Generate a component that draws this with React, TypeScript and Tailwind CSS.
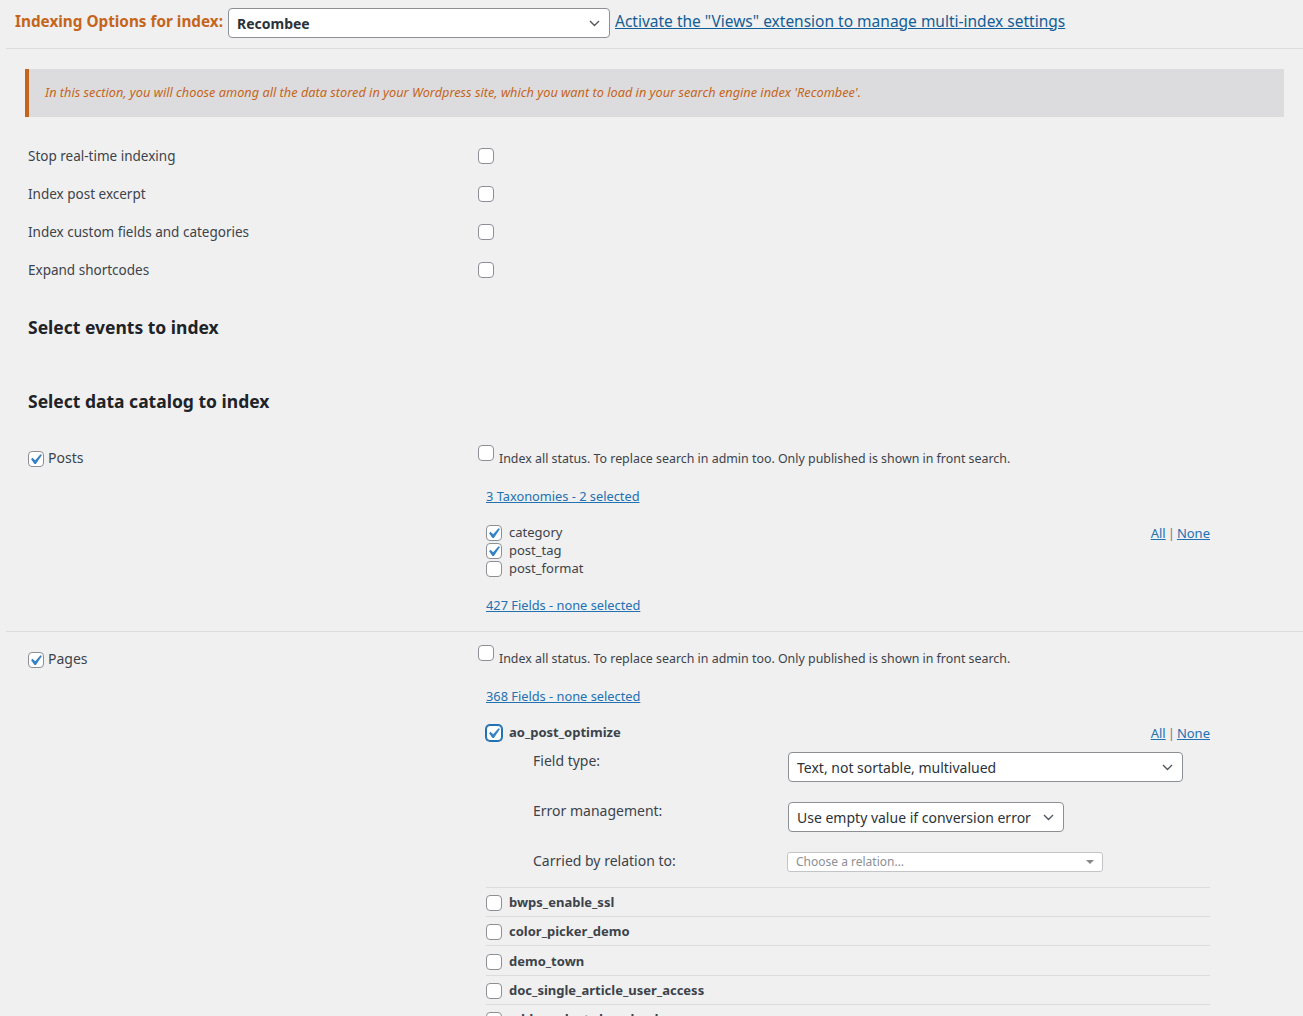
import React from 'react';

const font = { fontFamily: '"Noto Sans", "Open Sans", sans-serif' };

function Check({ checked = false, focus = false }: { checked?: boolean; focus?: boolean }) {
  return (
    <span
      className={
        'relative inline-block w-4 h-4 shrink-0 rounded-[4px] border bg-white ' +
        (focus ? 'border-[#2271b1] shadow-[0_0_0_1px_#2271b1]' : 'border-[#8c8f94]')
      }
    >
      {checked && (
        <svg viewBox="0 0 20 20" className="absolute top-[-3px] left-[-4px] w-[21px] h-[21px]">
          <path d="M14.83 4.89l1.34.94-5.81 8.38H9.02L5.78 9.67l1.34-1.25 2.57 2.4z" fill="#3582c4" />
        </svg>
      )}
    </span>
  );
}

function Chevron() {
  return (
    <svg width="11" height="7" viewBox="0 0 11 7" className="shrink-0">
      <polyline points="1,1 5.5,5.5 10,1" fill="none" stroke="#50575e" strokeWidth="1.4" />
    </svg>
  );
}

function Select({ value, width, bold = false }: { value: string; width: string; bold?: boolean }) {
  return (
    <div
      className={
        'flex items-center justify-between h-[30px] pl-[8px] pr-[9px] bg-white border border-[#8c8f94] rounded-[4px] text-[14px] text-[#2c3338] ' +
        width +
        (bold ? ' font-bold' : '')
      }
    >
      <span className="whitespace-nowrap">{value}</span>
      <Chevron />
    </div>
  );
}

function AllNone() {
  return (
    <div className="text-[13px] leading-[18px] whitespace-nowrap">
      <a className="text-[#2271b1] underline">All</a>
      <span className="text-[#787c82] mx-[2px]">|</span>
      <a className="text-[#2271b1] underline">None</a>
    </div>
  );
}

const options = [
  'Stop real-time indexing',
  'Index post excerpt',
  'Index custom fields and categories',
  'Expand shortcodes',
];

const taxonomies = [
  { name: 'category', checked: true },
  { name: 'post_tag', checked: true },
  { name: 'post_format', checked: false },
];

const fields = [
  { name: 'bwps_enable_ssl', h: 'h-[29px]' },
  { name: 'color_picker_demo', h: 'h-[29px]' },
  { name: 'demo_town', h: 'h-[30px]' },
  { name: 'doc_single_article_user_access', h: 'h-[29px]' },
  { name: 'edd_product_download', h: 'h-[29px]' },
];

const statusText = 'Index all status. To replace search in admin too. Only published is shown in front search.';

export default function App() {
  return (
    <div className="min-h-screen bg-[#f0f0f1] pl-[6px] text-[#3c434a] overflow-hidden h-[1016px]" style={font}>
      {/* header */}
      <div className="flex items-center pt-[8px] pl-[9px]">
        <div className="w-[213px] whitespace-nowrap text-[15.3px] font-bold text-[#c5651b] mb-[3px]">
          Indexing Options for index:
        </div>
        <Select value="Recombee" width="w-[382px]" bold />
        <a className="ml-[5px] text-[15.5px] text-[#135e96] underline whitespace-nowrap mb-[3px]">
          Activate the "Views" extension to manage multi-index settings
        </a>
      </div>
      <div className="mt-[10px] border-t border-[#dcdcde]" />

      <div className="px-[19px]">
        <div className="mt-[20px] h-[48px] flex items-center bg-[#dcdcde] border-l-4 border-[#c5651b] pl-[16px]">
          <p className="text-[12.75px] italic text-[#c5651b]">
            In this section, you will choose among all the data stored in your Wordpress site, which you want to load in your search engine index 'Recombee'.
          </p>
        </div>

        <div className="mt-[20px] pl-[3px]">
          {options.map((o) => (
            <div key={o} className="grid grid-cols-[450px_1fr] items-center h-[38px]">
              <span className="text-[13.5px]">{o}</span>
              <div className="flex">
                <Check />
              </div>
            </div>
          ))}

          <h2 className="mt-[26px] text-[17.5px] leading-[24px] font-bold text-[#1d2327]">Select events to index</h2>
          <h2 className="mt-[50px] text-[17.5px] leading-[24px] font-bold text-[#1d2327]">Select data catalog to index</h2>

          {/* Posts */}
          <div className="mt-[32px] grid grid-cols-[450px_1fr]">
            <div className="flex items-start gap-[4px] pt-[6px]">
              <Check checked />
              <span className="text-[14px] leading-[14px]">Posts</span>
            </div>
            <div>
              <div className="flex items-start gap-[5px]">
                <Check />
                <span className="mt-[4px] text-[12.4px] leading-[20px]">{statusText}</span>
              </div>
              <div className="pl-[8px] w-[732px]">
                <a className="block mt-[17px] text-[12.8px] leading-[20px] text-[#2271b1] underline">3 Taxonomies - 2 selected</a>
                <div className="mt-[18px] flex justify-between">
                  <div>
                    {taxonomies.map((t) => (
                      <div key={t.name} className="flex items-center gap-[7px] h-[18px]">
                        <Check checked={t.checked} />
                        <span className="text-[13px]">{t.name}</span>
                      </div>
                    ))}
                  </div>
                  <AllNone />
                </div>
                <a className="block mt-[17px] text-[12.8px] leading-[20px] text-[#2271b1] underline">427 Fields - none selected</a>
              </div>
            </div>
          </div>
        </div>
      </div>

      <div className="mt-[16px] border-t border-[#dcdcde]" />

      {/* Pages */}
      <div className="pl-[22px] mt-[13px] grid grid-cols-[450px_1fr]">
        <div className="flex items-start gap-[4px] pt-[7px]">
          <Check checked />
          <span className="text-[14px] leading-[14px]">Pages</span>
        </div>
        <div>
          <div className="flex items-start gap-[5px]">
            <Check />
            <span className="mt-[4px] text-[12.4px] leading-[20px]">{statusText}</span>
          </div>
          <div className="pl-[8px] w-[732px]">
            <a className="block mt-[17px] text-[12.8px] leading-[20px] text-[#2271b1] underline">368 Fields - none selected</a>
            <div className="mt-[18px] flex justify-between items-center h-[18px]">
              <div className="flex items-center gap-[7px]">
                <Check checked focus />
                <span className="text-[13px] font-bold">ao_post_optimize</span>
              </div>
              <AllNone />
            </div>

            <div className="pl-[47px] mt-[9px]">
              <div className="flex items-start">
                <span className="w-[255px] text-[14px] leading-[20px]">Field type:</span>
                <div className="mt-[1px]">
                  <Select value="Text, not sortable, multivalued" width="w-[395px]" />
                </div>
              </div>
              <div className="flex items-start mt-[19px]">
                <span className="w-[255px] text-[14px] leading-[20px]">Error management:</span>
                <div className="mt-[1px]">
                  <Select value="Use empty value if conversion error" width="w-[276px]" />
                </div>
              </div>
              <div className="flex items-start mt-[19px]">
                <span className="w-[254px] text-[14px] leading-[20px]">Carried by relation to:</span>
                <div className="mt-[1px] flex items-center justify-between w-[316px] h-[20px] pl-[8px] pr-[8px] bg-white border border-[#c3c4c7] rounded-[3px]">
                  <span className="text-[12px] text-[#8c8f94] whitespace-nowrap">Choose a relation…</span>
                  <span className="w-0 h-0 border-l-[4px] border-r-[4px] border-t-[4px] border-l-transparent border-r-transparent border-t-[#888]" />
                </div>
              </div>
            </div>

            <div className="mt-[15px]">
              {fields.map((f) => (
                <div key={f.name} className={'flex items-center gap-[7px] pt-[2px] border-t border-[#dcdcde] ' + f.h}>
                  <Check />
                  <span className="text-[13px] font-bold">{f.name}</span>
                </div>
              ))}
            </div>
          </div>
        </div>
      </div>
    </div>
  );
}
